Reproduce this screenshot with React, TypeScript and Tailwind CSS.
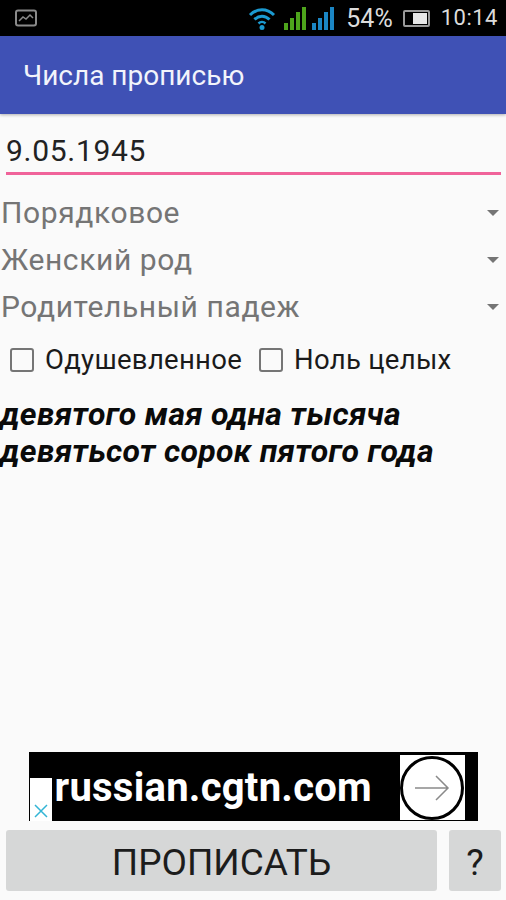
const spinners = ['Порядковое', 'Женский род', 'Родительный падеж'];
const checks = [
  { label: 'Одушевленное', width: 'w-[249px]' },
  { label: 'Ноль целых', width: 'w-auto' },
];

function StatusBar() {
  return (
    <div className="flex h-9 items-center bg-black pl-[15px] pr-[8px] text-[#dcdcdc]">
      <svg width="22" height="18" viewBox="0 0 22 18" fill="none" className="text-[#8a8a8a]">
        <rect x="1" y="1.5" width="20" height="15" rx="2" stroke="currentColor" strokeWidth="2" />
        <path d="M4 12l4-4 3 2 4-4 3 3" stroke="currentColor" strokeWidth="1.5" />
      </svg>
      <svg width="28" height="24" viewBox="0 0 28 24" fill="none" className="ml-auto -translate-x-[2px]">
        <path d="M2 9C9 2 19 2 26 9" stroke="#1b9ad1" strokeWidth="3" />
        <path d="M6.500 13.500C11 9 17 9 21.500 13.500" stroke="#1b9ad1" strokeWidth="3" />
        <path d="M10.500 17.500C12.500 15.500 15.500 15.500 17.500 17.500" stroke="#1b9ad1" strokeWidth="2.500" />
        <circle cx="14" cy="21.500" r="2.500" fill="#1b9ad1" />
      </svg>
      <div className="ml-[6px] flex h-[23px] items-end gap-[2px]">
        <span className="h-[7px] w-[4px] bg-[#4ea41c]" />
        <span className="h-[12px] w-[4px] bg-[#4ea41c]" />
        <span className="h-[18px] w-[4px] bg-[#4ea41c]" />
        <span className="h-[23px] w-[4px] bg-[#4ea41c]" />
      </div>
      <div className="ml-[6px] flex h-[23px] items-end gap-[2px]">
        <span className="h-[7px] w-[4px] bg-[#1b86c4]" />
        <span className="h-[12px] w-[4px] bg-[#1b86c4]" />
        <span className="h-[18px] w-[4px] bg-[#1b86c4]" />
        <span className="h-[23px] w-[4px] bg-[#1b86c4]" />
      </div>
      <span className="ml-[12px] text-[25px] leading-none">54%</span>
      <div className="ml-[10px] flex h-[17px] w-[27px] items-center justify-end rounded-[2px] border-2 border-[#9a9a9a] pr-[1px]">
        <span className="h-[11px] w-[14px] bg-[#e8e8e8]" />
      </div>
      <span className="ml-[11px] text-[22px] leading-none tracking-[0.5px]">10:14</span>
    </div>
  );
}

export default function App() {
  return (
    <div className="flex min-h-[900px] flex-col overflow-hidden bg-[#fafafa] font-['Roboto',sans-serif]">
      <StatusBar />
      <div className="flex h-[78px] items-center bg-[#3f51b5] pl-[23px] pt-[2px] text-[28px] text-[#f2f4fb] shadow-[0_1px_3px_rgba(0,0,0,0.3)]">
        Числа прописью
      </div>
      <div className="ml-[6px] mr-[5px] mt-[15px] h-[46px] border-b-[3px] border-[#f0639a] text-[30px] leading-[44px] tracking-[0.7px] text-[#222]">
        9.05.1945
      </div>
      <div className="mt-[14px] flex flex-col">
        {spinners.map((s) => (
          <div key={s} className="flex h-[47px] items-center justify-between pl-[1px] pr-[7px] text-[30px] tracking-[0.6px] text-[#757575]">
            <span>{s}</span>
            <span className="h-0 w-0 border-x-[6px] border-t-[6px] border-x-transparent border-t-[#757575]" />
          </div>
        ))}
      </div>
      <div className="mt-[8px] flex h-[44px] items-center pl-[10px]">
        {checks.map((c) => (
          <div key={c.label} className={`flex items-center ${c.width}`}>
            <span className="h-[24px] w-[24px] rounded-[3px] border-2 border-[#757575]" />
            <span className="ml-[11px] text-[27.5px] tracking-[0.3px] text-[#1a1a1a]">{c.label}</span>
          </div>
        ))}
      </div>
      <div className="mt-[14px] text-[32px] leading-[37px] font-bold italic tracking-[0.27px] text-[#0a0a0a]">
        девятого мая одна тысяча
        <br />
        девятьсот сорок пятого года
      </div>
      <div className="mx-auto mt-auto flex h-[69px] w-[449px] bg-black">
        <div className="ml-[1px] mt-[26px] flex h-[43px] w-[22px] items-end justify-center bg-white pb-[2px]">
          <svg width="16" height="16" viewBox="0 0 16 16" fill="none" stroke="#33b5d5" strokeWidth="1.500">
            <path d="M2 2l12 12M14 2L2 14" />
          </svg>
        </div>
        <span className="ml-[3px] mt-[12px] text-[40px] font-bold leading-[47px] tracking-[0.25px] text-white">
          russian.cgtn.com
        </span>
        <div className="ml-auto mr-[13px] mt-[3px] flex h-[65px] w-[65px] items-center justify-center bg-white">
          <div className="flex h-[64px] w-[64px] items-center justify-center rounded-full border-[3px] border-black">
            <svg width="36" height="26" viewBox="0 0 36 26" fill="none" stroke="#8a8a8a" strokeWidth="1.500">
              <path d="M1 13h33M22 1l12 12-12 12" />
            </svg>
          </div>
        </div>
      </div>
      <div className="mb-[9px] ml-[6px] mr-[5px] mt-[9px] flex h-[61px] gap-3">
        <div className="flex flex-1 items-center justify-center rounded-[3px] bg-[#d6d7d7] pt-[4px] text-[37px] text-[#1c1c1c]">
          ПРОПИСАТЬ
        </div>
        <div className="flex w-[52px] items-center justify-center rounded-[3px] bg-[#d6d7d7] pt-[4px] text-[37px] text-[#1c1c1c]">
          ?
        </div>
      </div>
    </div>
  );
}
